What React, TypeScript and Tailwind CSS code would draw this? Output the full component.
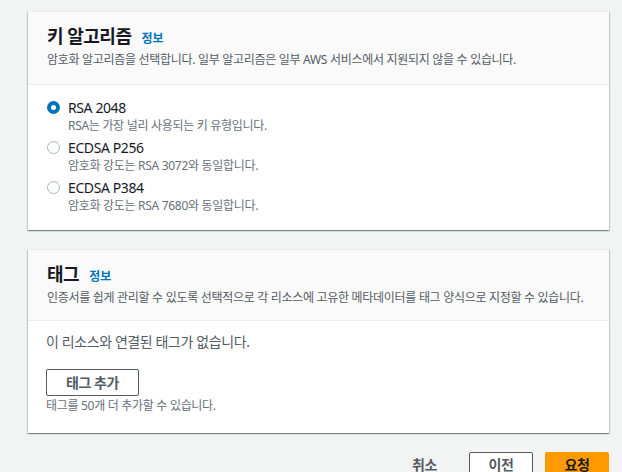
import React from "react";

const font = { fontFamily: '"Noto Sans", "Noto Sans CJK KR", sans-serif' };

function Radio({ checked }: { checked?: boolean }) {
  return checked ? (
    <span className="mt-[3px] box-border block h-[13px] w-[13px] shrink-0 rounded-full border-[4px] border-[#0073bb] bg-white" />
  ) : (
    <span className="mt-[3px] box-border block h-[13px] w-[13px] shrink-0 rounded-full border border-[#aab7b8] bg-white" />
  );
}

function Option({ label, desc, checked }: { label: string; desc: string; checked?: boolean }) {
  return (
    <div className="flex items-start gap-[8px]">
      <Radio checked={checked} />
      <div className="flex flex-col">
        <span className="text-[14px] leading-[20px] tracking-[-0.4px] text-[#16191f]">{label}</span>
        <span className="text-[12px] leading-[16px] tracking-[-0.3px] text-[#687078]">{desc}</span>
      </div>
    </div>
  );
}

const cardShadow =
  "shadow-[0_1px_1px_0_rgba(0,28,36,0.3),1px_1px_1px_0_rgba(0,28,36,0.15),-1px_1px_1px_0_rgba(0,28,36,0.15)] border-t border-[#eaeded]";

export default function App() {
  return (
    <div className="h-[472px] w-[622px] overflow-hidden bg-[#f2f3f3]" style={font}>
      <div className="ml-[28px] w-[581px] pt-[11px]">
        <div className={`bg-white ${cardShadow}`}>
          <div className="border-b border-[#eaeded] bg-[#fafafa] px-[19px] pb-[16px] pt-[12px]">
            <div className="flex items-baseline gap-[10px]">
              <span className="text-[18px] font-bold leading-[24px] tracking-[-0.5px] text-[#16191f]">키 알고리즘</span>
              <span className="text-[12px] font-bold text-[#0073bb]">정보</span>
            </div>
            <div className="mt-[4px] text-[12px] leading-[16px] tracking-[-0.3px] text-[#545b64]">
              암호화 알고리즘을 선택합니다. 일부 알고리즘은 일부 AWS 서비스에서 지원되지 않을 수 있습니다.
            </div>
          </div>
          <div className="flex flex-col gap-[4px] px-[19px] pb-[16px] pt-[13px]">
            <Option checked label="RSA 2048" desc="RSA는 가장 널리 사용되는 키 유형입니다." />
            <Option label="ECDSA P256" desc="암호화 강도는 RSA 3072와 동일합니다." />
            <Option label="ECDSA P384" desc="암호화 강도는 RSA 7680와 동일합니다." />
          </div>
        </div>

        <div className={`mt-[19px] bg-white ${cardShadow}`}>
          <div className="border-b border-[#eaeded] bg-[#fafafa] px-[19px] pb-[14px] pt-[12px]">
            <div className="flex items-baseline gap-[10px]">
              <span className="text-[18px] font-bold leading-[24px] tracking-[-0.5px] text-[#16191f]">태그</span>
              <span className="text-[12px] font-bold text-[#0073bb]">정보</span>
            </div>
            <div className="mt-[4px] whitespace-nowrap text-[12px] leading-[16px] tracking-[-0.3px] text-[#545b64]">
              인증서를 쉽게 관리할 수 있도록 선택적으로 각 리소스에 고유한 메타데이터를 태그 양식으로 지정할 수 있습니다.
            </div>
          </div>
          <div className="px-[18px] pb-[19px] pt-[11px]">
            <div className="text-[14px] leading-[20px] tracking-[-0.4px] text-[#545b64]">이 리소스와 연결된 태그가 없습니다.</div>
            <button className="mt-[17px] box-border h-[27px] w-[93px] rounded-[2px] border border-[#545b64] bg-white text-[14px] font-bold tracking-[-0.4px] text-[#545b64]">
              태그 추가
            </button>
            <div className="mt-[2px] text-[12px] leading-[16px] tracking-[-0.3px] text-[#687078]">태그를 50개 더 추가할 수 있습니다.</div>
          </div>
        </div>

        <div className="mt-[19px] flex items-start justify-end gap-[12px]">
          <span className="mr-[20px] mt-[2px] text-[14px] font-bold leading-[22px] tracking-[-0.4px] text-[#545b64]">취소</span>
          <button className="box-border flex h-[30px] w-[64px] items-start justify-center rounded-[2px] border border-[#545b64] bg-white pt-[1px] text-[14px] font-bold leading-[22px] tracking-[-0.4px] text-[#545b64]">
            이전
          </button>
          <button className="box-border flex h-[30px] w-[64px] items-start justify-center rounded-[2px] border border-[#ff9900] bg-[#ff9900] pt-[1px] text-[14px] font-bold leading-[22px] tracking-[-0.4px] text-[#16191f]">
            요청
          </button>
        </div>
      </div>
    </div>
  );
}
